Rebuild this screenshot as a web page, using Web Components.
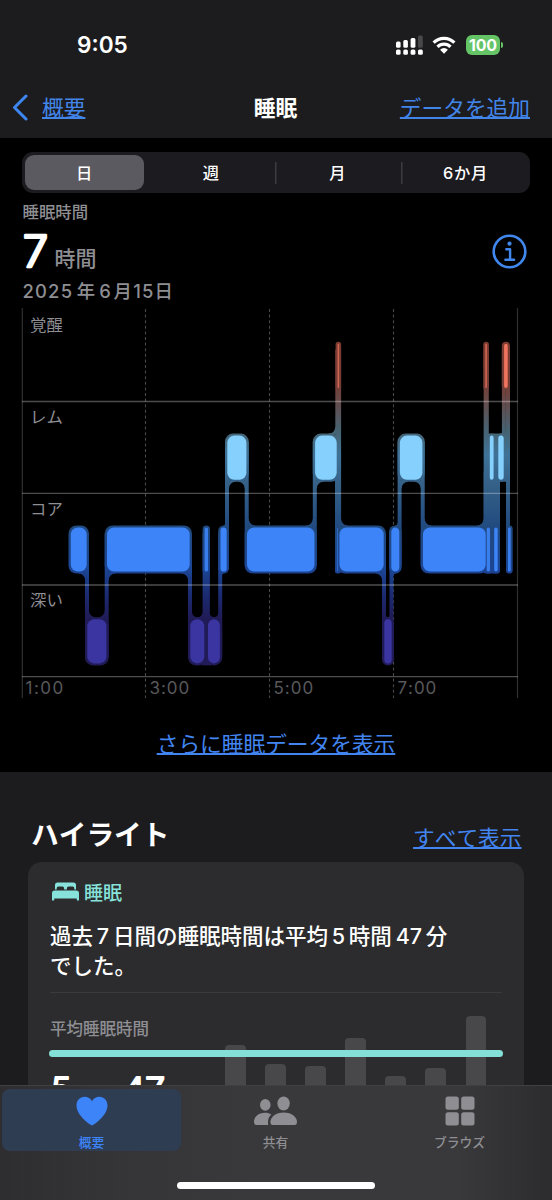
<!DOCTYPE html>
<html lang="ja">
<head>
<meta charset="UTF-8">
<meta name="viewport" content="width=device-width, initial-scale=1">
<title>睡眠</title>
<style>
  body {
    margin: 0;
    background: #000;
    color: #fff;
    font-family: Inter, "Noto Sans CJK JP", sans-serif;
    font-kerning: none;
  }
</style>
</head>
<body>
<health-app>
  <status-bar slot="top" time="9:05" battery="100"></status-bar>
  <nav-bar slot="top">
    <span slot="back">概要</span>
    <span slot="title">睡眠</span>
    <span slot="action">データを追加</span>
  </nav-bar>

  <segmented-control items="日,週,月,6か月" selected="0"></segmented-control>
  <sleep-summary></sleep-summary>
  <sleep-chart></sleep-chart>
  <text-link class="more">さらに睡眠データを表示</text-link>

  <highlight-section slot="highlights">
    <span slot="title">ハイライト</span>
    <text-link slot="action">すべて表示</text-link>
    <highlight-card></highlight-card>
  </highlight-section>

  <tab-bar slot="bottom"></tab-bar>
</health-app>

<script>
class HealthApp extends HTMLElement {
  constructor() {
    super();
    this.attachShadow({ mode: 'open' });
    this.shadowRoot.innerHTML = `
      <style>
        :host {
          display: flex;
          flex-direction: column;
          width: 552px;
          height: 1200px;
          overflow: hidden;
        }
        header { height: 138px; flex: none; background: #1c1c1e; }
        .detail {
          flex: none;
          height: 634px;
          box-sizing: border-box;
          padding-top: 14px;
          background: #000;
        }
        .highlights { flex: 1; min-height: 0; overflow: hidden; background: #1c1c1e; }
        ::slotted(.more) { display: block; text-align: center; margin-top: 30px; }
      </style>
      <header><slot name="top"></slot></header>
      <section class="detail"><slot></slot></section>
      <section class="highlights"><slot name="highlights"></slot></section>
      <slot name="bottom"></slot>
    `;
  }
}

class StatusBar extends HTMLElement {
  constructor() {
    super();
    this.attachShadow({ mode: 'open' });
    this.shadowRoot.innerHTML = `
      <style>
        :host {
          display: flex;
          align-items: center;
          justify-content: space-between;
          box-sizing: border-box;
          height: 60px;
          padding: 29px 49px 0 77px;
        }
        .time { font-size: 22.6px; font-weight: 600; }
        .icons { display: flex; align-items: center; }
        .wifi { margin: 0 10px 0 9px; }
        .battery {
          width: 34px;
          height: 20px;
          border-radius: 6px;
          background: #65c466;
          font-size: 16px;
          font-weight: 700;
          line-height: 20px;
          text-align: center;
          letter-spacing: -0.2px;
        }
        .nub { width: 2px; height: 6px; margin-left: 1px; border-radius: 0 2px 2px 0; background: #65c466; }
      </style>
      <span class="time"></span>
      <div class="icons">
        <svg width="27" height="20" viewBox="0 0 27 20" fill="#fff">
          <rect x="0" y="6.5" width="4.6" height="6.2" rx="1.5"/>
          <rect x="7.3" y="5" width="4.6" height="7.7" rx="1.5"/>
          <rect x="14.6" y="3" width="4.8" height="9.7" rx="1.5"/>
          <rect x="22" y="0.5" width="4.8" height="12.2" rx="1.5" fill="#48484a"/>
          <rect x="0" y="14.6" width="4.6" height="5.2" rx="1.5"/>
          <rect x="7.3" y="14.6" width="4.6" height="5.2" rx="1.5"/>
          <rect x="14.6" y="14.6" width="4.8" height="5.2" rx="1.5"/>
          <rect x="22" y="14.6" width="4.8" height="5.2" rx="1.5"/>
        </svg>
        <svg class="wifi" width="24" height="18" viewBox="0 0 24 18" fill="none" stroke="#fff" stroke-width="3.2">
          <path d="M1.6 6.6a14.8 14.8 0 0 1 20.8 0"/>
          <path d="M5.5 10.9a9.2 9.2 0 0 1 13 0"/>
          <path d="M8.1 13.7a5.5 5.5 0 0 1 7.8 0L12 17.8z" fill="#fff" stroke="none"/>
        </svg>
        <div class="battery"></div>
        <div class="nub"></div>
      </div>
    `;
  }

  connectedCallback() {
    this.shadowRoot.querySelector('.time').textContent = this.getAttribute('time');
    this.shadowRoot.querySelector('.battery').textContent = this.getAttribute('battery');
  }
}

class NavBar extends HTMLElement {
  constructor() {
    super();
    this.attachShadow({ mode: 'open' });
    this.shadowRoot.innerHTML = `
      <style>
        :host {
          display: grid;
          grid-template-columns: 1fr auto 1fr;
          align-items: center;
          height: 60px;
          margin-top: 17px;
          padding: 0 22px 0 12px;
          font-size: 21.7px;
          line-height: 32px;
        }
        .back { display: flex; align-items: center; gap: 14px; }
        .back .link, .title, .action { padding-top: 2px; }
        .link {
          color: #4285e8;
          text-decoration: underline;
          text-decoration-thickness: 1.5px;
          text-underline-offset: 1px;
        }
        .title { font-weight: 700; margin-left: 9px; }
        .action { text-align: right; white-space: nowrap; }
      </style>
      <div class="back">
        <svg width="16" height="27" viewBox="0 0 16 27" fill="none" stroke="#3f87f0" stroke-width="3" stroke-linecap="round" stroke-linejoin="round">
          <path d="M14 2L2.5 13.5L14 25"/>
        </svg>
        <span class="link"><slot name="back"></slot></span>
      </div>
      <div class="title"><slot name="title"></slot></div>
      <div class="action"><span class="link"><slot name="action"></slot></span></div>
    `;
  }
}

class TextLink extends HTMLElement {
  constructor() {
    super();
    this.attachShadow({ mode: 'open' });
    this.shadowRoot.innerHTML = `
      <style>
        :host { display: block; font-size: 21.7px; line-height: 32px; color: #4285f0; }
        span {
          text-decoration: underline;
          text-decoration-thickness: 1.5px;
          text-underline-offset: 1px;
        }
      </style>
      <span><slot></slot></span>
    `;
  }
}

class SegmentedControl extends HTMLElement {
  constructor() {
    super();
    this.attachShadow({ mode: 'open' });
    this.shadowRoot.innerHTML = `
      <style>
        :host {
          display: grid;
          grid-template-columns: 126px 126.5px 126.5px 1fr;
          height: 41px;
          margin: 0 22px;
          border-radius: 11px;
          background: #1c1b1f;
        }
        .item {
          display: flex;
          align-items: center;
          justify-content: center;
          padding-bottom: 2px;
          font-size: 16.3px;
          font-weight: 500;
          letter-spacing: 0.8px;
        }
        .selected { margin: 3px 4px 3px 3px; border-radius: 9px; background: #5b5a60; }
        .divided {
          background: linear-gradient(#3c3b40, #3c3b40) left center / 1.5px 22px no-repeat;
        }
      </style>
    `;
  }

  connectedCallback() {
    const selected = Number(this.getAttribute('selected'));
    this.getAttribute('items').split(',').forEach((label, i) => {
      const item = document.createElement('div');
      item.className = 'item';
      if (i === selected) item.classList.add('selected');
      if (i > selected + 1) item.classList.add('divided');
      item.textContent = label;
      this.shadowRoot.appendChild(item);
    });
  }
}

// Digits with soft corners, drawn as stroked SVG text
class RoundNumber extends HTMLElement {
  constructor() {
    super();
    this.attachShadow({ mode: 'open' });
  }

  connectedCallback() {
    const size = Number(this.getAttribute('size'));
    const width = Number(this.getAttribute('width'));
    const stroke = size / 16;
    const height = size * 0.73 + stroke;
    this.shadowRoot.innerHTML = `
      <style>
        :host { display: block; flex: none; line-height: 0; }
        text {
          font: 300 ${size}px Inter, sans-serif;
          fill: #fff;
          stroke: #fff;
          stroke-width: ${stroke}px;
          stroke-linejoin: round;
        }
      </style>
      <svg width="${width}" height="${height}" overflow="visible">
        <text x="0" y="${height - stroke / 2}" textLength="${width}" lengthAdjust="spacingAndGlyphs">${this.getAttribute('value')}</text>
      </svg>
    `;
  }
}

class SleepSummary extends HTMLElement {
  constructor() {
    super();
    this.attachShadow({ mode: 'open' });
    this.shadowRoot.innerHTML = `
      <style>
        :host {
          display: grid;
          grid-template-columns: 1fr auto;
          align-items: start;
          height: 113px;
          padding: 0 25px 0 22.5px;
          color: #8e8e93;
          font-weight: 500;
        }
        .label { font-size: 16.4px; line-height: 20px; margin-top: 8.5px; }
        .value { display: flex; align-items: flex-end; gap: 7px; height: 43px; margin-top: 10.5px; }
        .value round-number { margin-bottom: 7px; }
        .unit { font-size: 21px; line-height: 30px; margin-bottom: 1.5px; }
        .date { font-size: 18.4px; line-height: 24px; letter-spacing: 1.2px; margin-top: 3.5px; }
        .date .year { margin: 0 3px 0 3.5px; }
        .date .month { margin-left: 1.5px; }
        svg { display: block; margin-top: 41px; }
      </style>
      <div>
        <div class="label">睡眠時間</div>
        <div class="value">
          <round-number value="7" size="43" width="25"></round-number>
          <span class="unit">時間</span>
        </div>
        <div class="date">2025<span class="year">年</span>6<span class="month">月</span>15日</div>
      </div>
      <svg width="35" height="35" viewBox="0 0 35 35" fill="none" stroke="#4087ee" stroke-width="2.6">
        <circle cx="17.5" cy="17.5" r="15.8"/>
        <circle cx="17.5" cy="9.7" r="2.1" fill="#4087ee" stroke="none"/>
        <path d="M14.3 15.2h3.8v10.3M13.4 25.8h8.7" stroke-width="2.4" stroke-linecap="round" stroke-linejoin="round"/>
      </svg>
    `;
  }
}

// Top edge of the bar row of each stage
const STAGE_TOP = { awake: 343.8, rem: 435.6, core: 527.4, deep: 619.2 };
const STAGE_COLOR = { awake: '#f0745e', rem: '#86d0fd', core: '#3c84f7', deep: '#3a35a0' };
const BAR_HEIGHT = 44.2;
const HALO = 2;

// [stage, start x, end x], in order of time
const SEGMENTS = [
  ['core', 70.5, 87], ['deep', 87, 106.7], ['core', 106.7, 190],
  ['deep', 190, 204.6], ['core', 204.6, 208], ['deep', 207.7, 220.2],
  ['core', 220.2, 227], ['rem', 227, 246.7], ['core', 246.7, 314.8],
  ['rem', 314.8, 337], ['awake', 337.6, 339.1], ['core', 339.1, 384],
  ['deep', 384, 392], ['core', 391, 399.6], ['rem', 399.6, 422.7],
  ['core', 422.7, 486], ['awake', 485.3, 486.9], ['core', 486.7, 490],
  ['rem', 489.5, 493.9], ['core', 493.9, 498], ['rem', 498, 504],
  ['awake', 503.8, 508], ['core', 508, 510.7]
];

class SleepChart extends HTMLElement {
  constructor() {
    super();
    this.attachShadow({ mode: 'open' });
    this.shadowRoot.innerHTML = `
      <style>
        :host { display: block; height: 392px; }
        svg { display: block; }
        .halo { fill: url(#halo); }
        .rows { stroke: #fff; stroke-opacity: 0.3; stroke-width: 1.3; }
        .edges { stroke: #303032; stroke-width: 1.2; }
        .hours { stroke: #48484a; stroke-width: 1.1; stroke-dasharray: 3 2.6; }
        text { font-family: Inter, "Noto Sans CJK JP", sans-serif; font-size: 16.4px; }
        .stage { fill: #8e8e93; }
        .hour { fill: #58585b; font-size: 17px; letter-spacing: 0.2px; }
      </style>
      <svg width="552" height="392" viewBox="0 306 552 392">
        <defs>
          <linearGradient id="halo" gradientUnits="userSpaceOnUse" x1="0" y1="340" x2="0" y2="668">
            <stop offset="0" stop-color="#7d3c31"/>
            <stop offset="0.14" stop-color="#753e36"/>
            <stop offset="0.28" stop-color="#456474"/>
            <stop offset="0.35" stop-color="#3f7297"/>
            <stop offset="0.45" stop-color="#345f86"/>
            <stop offset="0.58" stop-color="#20497f"/>
            <stop offset="0.7" stop-color="#1c4594"/>
            <stop offset="0.78" stop-color="#1b2a70"/>
            <stop offset="0.85" stop-color="#201b56"/>
            <stop offset="1" stop-color="#211c58"/>
          </linearGradient>
        </defs>
        <path class="edges" d="M22.3 308V698M517.5 308V698"/>
        <path class="hours" d="M145.5 309V698M269.5 309V698M393.5 309V698"/>
        <g class="halo">${this.halo()}</g>
        <path class="rows" d="M22 401.5H518M22 493.3H518M22 585H518M22 676.7H518"/>
        ${this.bars()}
        <text class="stage" x="30" y="331">覚醒</text>
        <text class="stage" x="30" y="422.5">レム</text>
        <text class="stage" x="30" y="514.5">コア</text>
        <text class="stage" x="30" y="606">深い</text>
        <text class="hour" x="25.5" y="694" textLength="38">1:00</text>
        <text class="hour" x="149.5" y="694" textLength="40">3:00</text>
        <text class="hour" x="273.5" y="694" textLength="40">5:00</text>
        <text class="hour" x="397.5" y="694" textLength="39">7:00</text>
      </svg>
    `;
  }

  bars() {
    const bars = SEGMENTS.map(([stage, start, end]) => {
      const width = end - start;
      // very short phases are drawn fainter
      const opacity = width < 2 ? 0.75 : width < 4 ? 0.9 : 1;
      const inset = width > 4 ? 0.3 : 0;
      return `<rect x="${start + inset}" y="${STAGE_TOP[stage]}" width="${width - 2 * inset}" height="${BAR_HEIGHT}"
        rx="${Math.min(7, width / 2)}" fill="${STAGE_COLOR[stage]}" opacity="${opacity}"/>`;
    });
    bars.push(`<rect x="336.9" y="528" width="1.2" height="43.5" fill="#3c84f7" opacity="0.55"/>`);
    return bars.join('');
  }

  halo() {
    let shapes = '';
    SEGMENTS.forEach(([stage, start, end], i) => {
      const width = end - start + 2 * HALO;
      shapes += `<rect x="${start - HALO}" y="${STAGE_TOP[stage] - HALO}" width="${width}"
        height="${BAR_HEIGHT + 2 * HALO}" rx="${Math.min(8, width / 2)}"/>`;
      if (i > 0) shapes += this.link(SEGMENTS[i - 1], SEGMENTS[i]);
    });
    // brief dip to core right before waking
    shapes += `<rect x="335" y="460" width="6" height="113.6" rx="2"/>`;
    // phases that sit too close together share one halo
    shapes += `<rect x="202" y="625" width="9" height="40.4"/>`;
    shapes += `<rect x="483.7" y="470" width="16" height="103.6" rx="2"/>`;
    shapes += `<rect x="484" y="433.6" width="24" height="48.2" rx="2"/>`;
    return shapes;
  }

  // Vertical strip joining two phases, with rounded inner corners
  link(left, right) {
    const x = (left[2] + right[1]) / 2;
    const rising = STAGE_TOP[right[0]] < STAGE_TOP[left[0]];
    const upper = rising ? right : left;
    const lower = rising ? left : right;
    const top = STAGE_TOP[upper[0]];
    const bottom = STAGE_TOP[lower[0]] + BAR_HEIGHT;
    const upperSide = rising ? 1 : -1;
    return `<rect x="${x - HALO}" y="${top + 6}" width="${2 * HALO}" height="${bottom - top - 12}"/>`
      + this.fillet(x, upperSide, top + BAR_HEIGHT + HALO, 1, upper[2] - upper[1])
      + this.fillet(x, -upperSide, STAGE_TOP[lower[0]] - HALO, -1, lower[2] - lower[1]);
  }

  fillet(x, sx, y, sy, width) {
    const r = Math.min(6.5, (width - 2 * HALO) / 2);
    if (r <= 0) return '';
    const cx = x + sx * HALO;
    const sweep = sx * sy > 0 ? 0 : 1;
    return `<path d="M${cx - sx} ${y - sy}H${cx + sx * r}V${y}A${r} ${r} 0 0 ${sweep} ${cx} ${y + sy * r}H${cx - sx}Z"/>`;
  }
}

class HighlightSection extends HTMLElement {
  constructor() {
    super();
    this.attachShadow({ mode: 'open' });
    this.shadowRoot.innerHTML = `
      <style>
        :host { display: block; padding: 42px 28px 0; }
        .head {
          display: flex;
          justify-content: space-between;
          align-items: flex-end;
          height: 42px;
          padding: 0 2.5px 0 3px;
          margin-bottom: 6px;
        }
        ::slotted(text-link) { margin-bottom: 2px; }
        .title { font-size: 27.7px; font-weight: 700; line-height: 42px; }
      </style>
      <div class="head">
        <div class="title"><slot name="title"></slot></div>
        <slot name="action"></slot>
      </div>
      <slot></slot>
    `;
  }
}

class HighlightCard extends HTMLElement {
  constructor() {
    super();
    this.attachShadow({ mode: 'open' });
    this.shadowRoot.innerHTML = `
      <style>
        :host {
          display: block;
          box-sizing: border-box;
          width: 496px;
          height: 330px;
          padding: 14px 22px 0;
          border-radius: 14px;
          background: #2c2c2e;
        }
        .category {
          display: flex;
          align-items: center;
          gap: 5px;
          height: 30px;
          padding-left: 2px;
          color: #86e2da;
          font-size: 19px;
          font-weight: 500;
        }
        .message {
          margin: 15px 0 0;
          height: 71px;
          border-bottom: 1px solid #3a3a3c;
          font-size: 21.5px;
          font-weight: 500;
          line-height: 30px;
          white-space: nowrap;
        }
        .message span { margin: 0 3.8px; }
        .average { display: grid; margin-top: 22px; }
        .average > * { grid-area: 1 / 1; }
        .text { color: #8e8e93; font-weight: 500; margin-top: 1px; }
        .label { font-size: 16.5px; line-height: 26px; }
        .value {
          display: flex;
          align-items: flex-start;
          margin-top: 35px;
          padding-left: 1px;
          font-size: 18px;
          line-height: 22px;
        }
        .value .unit { margin: 6.5px 9px 0 7px; }
        .bars { display: flex; align-items: flex-end; gap: 19.5px; height: 140px; margin: 0 0 0 175px; }
        .bars i { width: 20.6px; border-radius: 4px 4px 0 0; background: #48484a; }
        .line { height: 7px; margin: 35px -1px 0; border-radius: 4px; background: #86e2da; opacity: 0.98; }
      </style>
      <div class="category">
        <svg width="27" height="19" viewBox="0 0 27 19" fill="#86e2da">
          <path d="M3 7.5V3a2.6 2.6 0 0 1 2.6-2.6h15.8A2.6 2.6 0 0 1 24 3v4.5h-1.7V6.2a1.7 1.7 0 0 0-1.7-1.7h-4a1.7 1.7 0 0 0-1.7 1.7v1.3h-2.8V6.2a1.7 1.7 0 0 0-1.7-1.7h-4a1.7 1.7 0 0 0-1.7 1.7v1.3z"/>
          <path d="M0 11.3a2.8 2.8 0 0 1 2.8-2.8h21.4a2.8 2.8 0 0 1 2.8 2.8V18a.6.6 0 0 1-.6.6h-1a.6.6 0 0 1-.6-.6v-1.5H2.2V18a.6.6 0 0 1-.6.6h-1A.6.6 0 0 1 0 18z"/>
        </svg>
        睡眠
      </div>
      <p class="message">過去<span>7</span>日間の睡眠時間は平均<span>5</span>時間<span>47</span>分<br>でした。</p>
      <div class="average">
        <div class="bars"></div>
        <div class="line"></div>
        <div class="text">
          <div class="label">平均睡眠時間</div>
          <div class="value">
            <round-number value="5" size="32" width="20"></round-number><span class="unit">時間</span>
            <round-number value="47" size="32" width="42"></round-number><span class="unit">分</span>
          </div>
        </div>
      </div>
    `;
    const bars = this.shadowRoot.querySelector('.bars');
    for (const height of [110, 91, 89, 117.5, 79, 87.5, 139]) {
      const bar = document.createElement('i');
      bar.style.height = `${height}px`;
      bars.appendChild(bar);
    }
  }
}

class TabBar extends HTMLElement {
  constructor() {
    super();
    this.attachShadow({ mode: 'open' });
    this.shadowRoot.innerHTML = `
      <style>
        :host {
          display: flex;
          flex-direction: column;
          align-items: center;
          flex: none;
          height: 115px;
          box-sizing: border-box;
          border-top: 1px solid #404042;
          background: linear-gradient(90deg, #2e2e30, #353537 22%, #39393b 45%, #39393b 83%, #2c2c2e);
        }
        .tabs {
          display: grid;
          grid-template-columns: repeat(3, 178.5px);
          gap: 5.5px;
          margin-top: 2.5px;
          padding-right: 1px;
        }
        .tab {
          display: flex;
          flex-direction: column;
          align-items: center;
          box-sizing: border-box;
          height: 62px;
          padding-top: 7.5px;
          border-radius: 8px;
          color: #8e8e93;
          font-size: 12.8px;
          font-weight: 500;
          line-height: 18px;
        }
        .tab svg { display: block; flex: none; margin-bottom: 8px; }
        .active { background: #2f3d52; color: #3c84f7; }
        .home { width: 198px; height: 7px; margin-top: 31.5px; border-radius: 4px; background: #fff; }
      </style>
      <div class="tabs">
        <div class="tab active">
          <svg width="32" height="30" viewBox="0 0 32 30" fill="#3c84f7">
            <path d="M16 29.5C14.8 29.5 0.5 20 0.5 9.6C0.5 4.2 4 0.7 8.6 0.7C11.9 0.7 14.6 2.4 16 5.2C17.4 2.4 20.1 0.7 23.4 0.7C28 0.7 31.5 4.2 31.5 9.6C31.5 20 17.2 29.5 16 29.5Z"/>
          </svg>
          概要
        </div>
        <div class="tab">
          <svg width="43" height="30" viewBox="0 0 43 30" fill="#8e8e93">
            <ellipse cx="11.3" cy="8.9" rx="5.3" ry="5.9"/>
            <path d="M0 25.5C0 21 4.3 16.8 11 16.8C13.5 16.8 15.6 17.4 17.3 18.4C14.6 20.7 13.6 23.7 14.2 29H2.5C.8 29 0 27.9 0 25.5Z"/>
            <ellipse cx="29.6" cy="7.5" rx="6.2" ry="6.9"/>
            <path d="M16.4 26C16.4 21.2 21.4 16.5 29.7 16.5C38 16.5 43 21.2 43 26C43 28 42.2 29 40.5 29H18.9C17.2 29 16.4 28 16.4 26Z"/>
          </svg>
          共有
        </div>
        <div class="tab">
          <svg width="30" height="30" viewBox="0 0 30 30" fill="#8e8e93">
            <rect x="0.5" y="0.5" width="13.3" height="13.3" rx="2.5"/>
            <rect x="16.2" y="0.5" width="13.3" height="13.3" rx="2.5"/>
            <rect x="0.5" y="16.2" width="13.3" height="13.3" rx="2.5"/>
            <rect x="16.2" y="16.2" width="13.3" height="13.3" rx="2.5"/>
          </svg>
          ブラウズ
        </div>
      </div>
      <div class="home"></div>
    `;
  }
}

customElements.define('round-number', RoundNumber);
customElements.define('status-bar', StatusBar);
customElements.define('nav-bar', NavBar);
customElements.define('text-link', TextLink);
customElements.define('segmented-control', SegmentedControl);
customElements.define('sleep-summary', SleepSummary);
customElements.define('sleep-chart', SleepChart);
customElements.define('highlight-card', HighlightCard);
customElements.define('highlight-section', HighlightSection);
customElements.define('tab-bar', TabBar);
customElements.define('health-app', HealthApp);
</script>
</body>
</html>
